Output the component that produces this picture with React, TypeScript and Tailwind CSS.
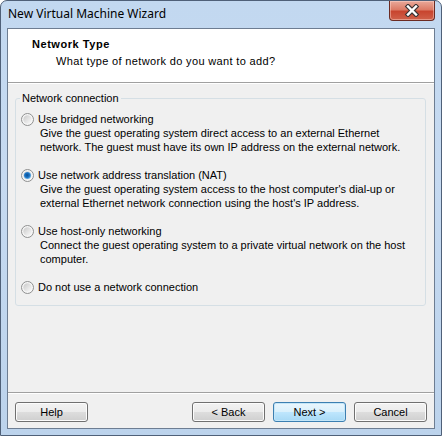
import React from "react";

const ui = "font-['Liberation_Sans',Arial,sans-serif]";

function Radio({ checked }: { checked?: boolean }) {
  return (
    <svg width="13" height="13" viewBox="0 0 13 13" className="shrink-0">
      <defs>
        <linearGradient id="radioWell" x1="0" y1="0" x2="1" y2="1">
          <stop offset="0" stopColor="#c9c9c9" />
          <stop offset="1" stopColor="#fbfbfb" />
        </linearGradient>
        <radialGradient id="radioDot" cx="0.45" cy="0.45" r="0.6">
          <stop offset="0" stopColor="#0b4f93" />
          <stop offset="0.55" stopColor="#1d74c4" />
          <stop offset="1" stopColor="#8ccbf2" />
        </radialGradient>
      </defs>
      <circle cx="6.5" cy="6.5" r="6" fill="#f6f6f6" stroke="#8e8f8f" />
      <circle cx="6.5" cy="6.5" r="4.2" fill="url(#radioWell)" />
      {checked && <circle cx="6.5" cy="6.5" r="3.6" fill="url(#radioDot)" />}
    </svg>
  );
}

function Option({ label, desc, checked }: { label: string; desc?: string[]; checked?: boolean }) {
  return (
    <div className="flex flex-col">
      <div className="h-[14px] flex items-center gap-[4px] pl-[5px]">
        <Radio checked={checked} />
        <span className="leading-[14px]">{label}</span>
      </div>
      {desc && (
        <div className="pl-[24px]">
          {desc.map((line) => (
            <div key={line} className="h-[14px] leading-[14px] whitespace-nowrap">
              {line}
            </div>
          ))}
        </div>
      )}
    </div>
  );
}

function Button({ children, primary }: { children: React.ReactNode; primary?: boolean }) {
  return (
    <button
      className={
        primary
          ? "w-[73px] h-[20px] rounded-[3px] border border-[#3c7fb1] bg-[linear-gradient(180deg,#eaf6fd_0%,#d9f0fc_50%,#bee6fd_51%,#a7d9f5_100%)] shadow-[inset_0_0_0_1px_#c4e6f8] text-[11px] text-black leading-none"
          : "w-[73px] h-[20px] rounded-[3px] border border-[#707070] bg-[linear-gradient(180deg,#f2f2f2_0%,#ebebeb_50%,#dddddd_51%,#cfcfcf_100%)] shadow-[inset_0_0_0_1px_#fcfcfc] text-[11px] text-black leading-none"
      }
    >
      {children}
    </button>
  );
}

export default function App() {
  return (
    <div className={`w-[442px] h-[436px] flex flex-col rounded-t-[7px] border border-[#4f6078] bg-[linear-gradient(180deg,#c2d8f0_0%,#c6daf1_40%,#bcd3ec_100%)] overflow-hidden ${ui}`}>
      {/* title bar */}
      <div className="h-[27px] flex items-start shrink-0">
        <span className="pl-[7px] pt-[5px] text-[12px] leading-[16px] text-black font-['Noto_Sans',sans-serif]">
          New Virtual Machine Wizard
        </span>
        <div className="ml-auto mr-[6px] w-[46px] h-[20px] rounded-b-[4px] border border-t-0 border-[#6b2b22] bg-[linear-gradient(180deg,#e9a99a_0%,#dc7b66_45%,#c8452f_55%,#d0614a_100%)] shadow-[inset_0_0_0_1px_rgba(255,220,210,0.45)] flex items-center justify-center">
          <svg width="16" height="13" viewBox="0 0 16 13">
            <path d="M4 2.5 L12 10.5 M12 2.5 L4 10.5" stroke="#3d3535" strokeWidth="4.6" strokeLinecap="square" />
            <path d="M4 2.5 L12 10.5 M12 2.5 L4 10.5" stroke="#ffffff" strokeWidth="2.4" strokeLinecap="square" />
          </svg>
        </div>
      </div>

      {/* client area */}
      <div className="flex-1 mx-[6px] mb-[6px] border border-[#6d7d92] bg-[#f0f0f0] flex flex-col text-[11px] text-black">
        <div className="h-[53px] bg-white pt-[8px] pl-[24px] shrink-0">
          <div className="h-[14px] leading-[14px] font-bold tracking-[0.55px]">Network Type</div>
          <div className="h-[14px] leading-[14px] mt-[3px] pl-[24px] tracking-[0.35px]">What type of network do you want to add?</div>
        </div>
        <div className="h-px bg-[#a0a0a0] shrink-0" />
        <div className="h-px bg-white shrink-0" />

        <fieldset className="mt-[8px] ml-[7px] mr-[8px] border border-[#d5dfe5] rounded-[3px] px-0 pb-[11px]">
          <legend className="ml-[4px] px-[2px] leading-[13px]">Network connection</legend>
          <div className="pt-[7px] flex flex-col gap-[14px]">
            <Option
              label="Use bridged networking"
              desc={[
                "Give the guest operating system direct access to an external Ethernet",
                "network. The guest must have its own IP address on the external network.",
              ]}
            />
            <Option
              checked
              label="Use network address translation (NAT)"
              desc={[
                "Give the guest operating system access to the host computer's dial-up or",
                "external Ethernet network connection using the host's IP address.",
              ]}
            />
            <Option
              label="Use host-only networking"
              desc={[
                "Connect the guest operating system to a private virtual network on the host",
                "computer.",
              ]}
            />
            <Option label="Do not use a network connection" />
          </div>
        </fieldset>

        <div className="flex-1" />

        <div className="h-px bg-[#a0a0a0] shrink-0" />
        <div className="h-px bg-white shrink-0" />
        <div className="flex items-center pt-[8px] pb-[6px] px-[7px] shrink-0">
          <Button>Help</Button>
          <div className="ml-auto flex gap-[8px]">
            <Button>&lt; Back</Button>
            <Button primary>Next &gt;</Button>
            <Button>Cancel</Button>
          </div>
        </div>
      </div>
    </div>
  );
}
